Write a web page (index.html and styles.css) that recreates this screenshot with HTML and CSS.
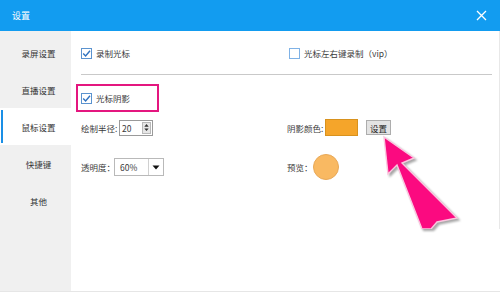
FILE: index.html
```html
<!DOCTYPE html>
<html lang="zh-CN">
<head>
<meta charset="utf-8">
<title>设置</title>
<link rel="stylesheet" href="styles.css">
</head>
<body>
<div class="window">
  <header class="titlebar">
    <span class="title">设置</span>
    <svg class="close" width="11" height="11" viewBox="0 0 11 11"><path d="M1 1 L10 10 M10 1 L1 10" stroke="#fff" stroke-width="1.3" fill="none"/></svg>
  </header>
  <div class="main">
    <nav class="sidebar">
      <div class="nav-item">录屏设置</div>
      <div class="nav-item">直播设置</div>
      <div class="nav-item active">鼠标设置</div>
      <div class="nav-item">快捷键</div>
      <div class="nav-item">其他</div>
    </nav>
    <section class="content">
      <div class="panel">
        <div class="row row1">
          <label class="check"><span class="box"><svg width="9" height="9" viewBox="0 0 9 9"><path d="M1.2 4.6 L3.6 7 L8 1.8" stroke="#2f72c0" stroke-width="1.4" fill="none"/></svg></span>录制光标</label>
          <label class="check col2"><span class="box empty"></span>光标左右键录制（vip）</label>
        </div>
        <div class="sep"></div>
        <div class="highlight">
          <label class="check"><span class="box"><svg width="9" height="9" viewBox="0 0 9 9"><path d="M1.2 4.6 L3.6 7 L8 1.8" stroke="#2f72c0" stroke-width="1.4" fill="none"/></svg></span>光标阴影</label>
        </div>
        <div class="row row3">
          <div class="field"><span class="lbl w38">绘制半径:</span><span class="spin"><span class="spin-val">20</span><span class="spin-btn"><svg width="8" height="11" viewBox="0 0 8 11"><path d="M4 1.5 L6.5 4.5 L1.5 4.5 Z M4 9.5 L6.5 6.5 L1.5 6.5 Z" fill="#333"/></svg></span></span></div>
          <div class="field"><span class="lbl w38">阴影颜色:</span><span class="swatch"></span><button class="btn">设置</button></div>
        </div>
        <div class="row row4">
          <div class="field"><span class="lbl w33">透明度：</span><span class="combo"><span class="combo-val">60%</span><span class="combo-btn"><svg width="8" height="5" viewBox="0 0 8 5"><path d="M0.5 0.5 L7.5 0.5 L4 4.5 Z" fill="#111"/></svg></span></span></div>
          <div class="field"><span class="lbl w26">预览：</span><span class="circle"></span></div>
        </div>
      </div>
    </section>
  </div>
  <svg class="arrow" width="500" height="229" viewBox="0 0 500 229">
    <polygon points="384,137 414,158 402,163 457,218 437,222 431,229 422,229 397,165 388,174" fill="#fb0a80" stroke="#fbc6df" stroke-width="1.4" stroke-linejoin="miter"/>
  </svg>
</div>
</body>
</html>
```

FILE: styles.css
```css
* { box-sizing: border-box; }
html, body { margin: 0; padding: 0; }
body {
  width: 500px;
  height: 292px;
  overflow: hidden;
  background: #ffffff;
  font-family: "Noto Sans CJK SC", "Noto Sans", sans-serif;
  font-size: 8.5px;
  color: #3a3a3a;
}
.window {
  position: relative;
  width: 500px;
  height: 292px;
  display: flex;
  flex-direction: column;
}
.titlebar {
  height: 31px;
  flex: none;
  background: #129cf0;
  display: flex;
  align-items: center;
  justify-content: space-between;
  padding: 0 12px 0 12px;
  color: #ffffff;
}
.title { font-size: 9px; line-height: 1; }
.close { display: block; margin-right: 1px; }
.main {
  flex: 1;
  display: flex;
  border-bottom: 1px solid #e6e6e6;
}
.sidebar {
  width: 71px;
  flex: none;
  background: #f0f0f0;
  padding-top: 3px;
}
.nav-item {
  height: 37px;
  display: flex;
  align-items: center;
  justify-content: center;
  padding-left: 6px;
  color: #333333;
  position: relative;
}
.nav-item.active {
  background: #ffffff;
}
.nav-item.active::before {
  content: "";
  position: absolute;
  left: 1px;
  top: 2px;
  bottom: 2px;
  width: 2px;
  background: #1a8fe6;
}
.content {
  flex: 1;
  background: #ffffff;
}
.panel {
  height: 198px;
  border-right: 1px solid #e8e8e8;
  padding: 14px 7px 0 10px;
}
.row {
  display: grid;
  grid-template-columns: 206px 1fr;
  align-items: center;
}
.row1 { height: 16px; }
.col2 { margin-left: 2px; }
.check {
  display: flex;
  align-items: center;
  gap: 4px;
  white-space: nowrap;
}
.box {
  width: 11px;
  height: 11px;
  border: 1px solid #5b93cf;
  background: #ffffff;
  display: flex;
  align-items: center;
  justify-content: center;
}
.box.empty { border-color: #7fb2e6; }
.box svg { display: block; }
.sep {
  margin-top: 13px;
  height: 1px;
  background: #c9c9c9;
}
.highlight {
  margin-top: 9px;
  margin-left: -5px;
  width: 83px;
  height: 28px;
  border: 2px solid #e4167f;
  padding-left: 3px;
  display: flex;
  align-items: center;
}
.row3 { margin-top: 7px; height: 16px; }
.row4 { margin-top: 19px; height: 18px; }
.field {
  display: flex;
  align-items: center;
  white-space: nowrap;
}
.lbl { flex: none; }
.w38 { width: 38px; }
.w33 { width: 33px; }
.w26 { width: 26px; }
.spin {
  width: 34px;
  height: 16px;
  border: 1px solid #9a9a9a;
  display: flex;
  align-items: center;
  justify-content: space-between;
  padding: 0 1px 0 2px;
}
.spin-btn {
  width: 9px;
  height: 12px;
  background: #e6e6e6;
  border: 1px solid #b8b8b8;
  display: flex;
  align-items: center;
  justify-content: center;
}
.spin-btn svg { display: block; }
.swatch {
  width: 33px;
  height: 17px;
  background: #f5a52a;
  border: 1px solid #d8921e;
}
.btn {
  margin-left: 8px;
  width: 25px;
  height: 15px;
  padding: 0;
  background: #e3e3e3;
  border: 1px solid #adadad;
  font-family: inherit;
  font-size: 8.5px;
  color: #222222;
  display: flex;
  align-items: center;
  justify-content: center;
}
.combo {
  width: 50px;
  height: 18px;
  border: 1px solid #b9b9b9;
  display: flex;
  align-items: stretch;
}
.combo-val {
  flex: 1;
  display: flex;
  align-items: center;
  padding-left: 5px;
}
.combo-btn {
  width: 15px;
  border-left: 1px solid #d0d0d0;
  display: flex;
  align-items: center;
  justify-content: center;
}
.combo-btn svg { display: block; }
.circle {
  width: 26px;
  height: 26px;
  border-radius: 50%;
  background: #f9b962;
  border: 1px solid #e8a857;
}
.arrow {
  position: absolute;
  left: 0;
  top: 0;
  pointer-events: none;
  filter: drop-shadow(2px 2px 1.2px rgba(0, 0, 0, 0.35));
}
```
